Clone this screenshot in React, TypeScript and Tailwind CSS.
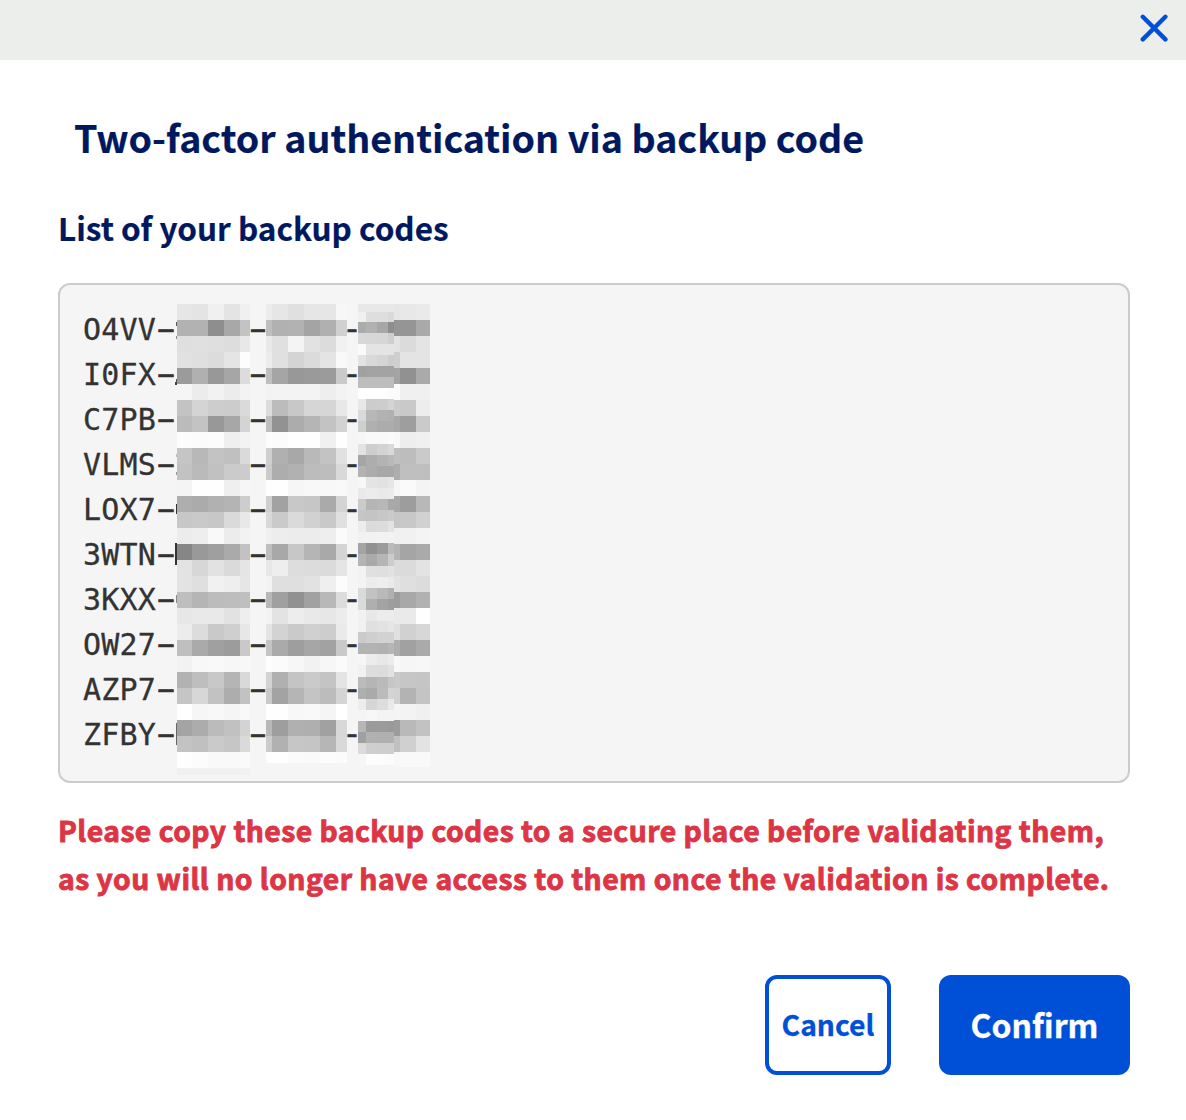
type Mark = { top: number; height: number; width: number; color: string };

const mark = (top: number, height: number, width = 1, color = '#555'): Mark => ({ top, height, width, color });

// Code prefix and the sliver of the next glyph that stays visible beside the mosaic.
const codes: [string, Mark[]][] = [
  ['O4VV', [mark(15, 4), mark(10, 3, 1, '#888')]],
  ['I0FX', [mark(27, 3, 1, '#555'), mark(0, 3, 2, '#444')]],
  ['C7PB', []],
  ['VLMS', [mark(12, 3, 1, '#bbb'), mark(15, 3, 1, '#999')]],
  ['LOX7', [mark(17, 10, 1, '#333')]],
  ['3WTN', [mark(11, 22, 2, '#333')]],
  ['3KXX', [mark(18, 8, 1, '#888')]],
  ['OW27', []],
  ['AZP7', []],
  ['ZFBY', [mark(11, 22, 1, '#666')]],
];

// Each word is one row of the censoring mosaic, two hex digits of grey per cell.
const first =
  'e6e4f0e4f0 b2b28ea8c3 dfe0dfdde8 e1dfdce5fd 9bb098a6dc f5ecf2ecf3 c3d4cdccda bbc398a7d4 fcfbfceff3 c5b8c3c0da c2bac1cbcc f4fefeeff6 aeabb1b4cd c7c9c7dae8 eceef9ecf2 86999faac2 e3d7e2dae5 e3dff1eee6 beb5bcbdbf e7e9e9e2ee ecdcc9cfe7 bfaaa09cc9 f2f8f9f7f8 b2bec8b5d9 c5d7c2adc2 fff6f8f5f9 a4acbbc1d3 c3c0cac6da fefcf9f9fa f0f0f0f0f1';
const second =
  'ece6e0e6e6f7 beb1b2a4b0d0 e8e0f4e2dcf1 ece0d4dbe4f9 bea5989a9bca f2f3f3f3eef3 dcbcc8d6d6e8 be92acb5c3d2 fcfbfefef0fe cfb0a8b9c3e1 cbadb1bcbdd9 fdfef6f8f8f9 cfa2c8c6aad4 d8cadad1c9e0 f0edececeefb bea8c7b5a9d4 e7eedddcdbe5 f3dfdfe2effc b8a091a1b8dc f3e3ede9e7ec e4d3cad0cdea c4aa9ea6a2c9 fdfbf7f2f7fb d4b0c4cac4e4 c9a3b5c4bcd4 fffef8f9f5ff b89eb0afa1d8 cbb1c6c5b6d9 fdfefbfafcfb';
const thirdLeft =
  'f0dededa abb1a78e d8d7d6ce fae4e4e4 e3d9d5cd a1a3a3a3 bdbdbdbd fefefefc e8cccdd4 dab7b2b0 ceb0acac f6f9f9fa e3ced3d9 a5adb3b9 b3aca8a8 f7e4e2e6 e9eceaec cbb5b8a9 c5c4c7ca ecdbdce3 f1f2f2f2 a4919bbb b4aab5cc f3e0dfe2 f3eceeea dac2b9b0 daafa39e f1e8ecec f1e0e2e6 cbcfd2d2 b3b3b1b6 f6ece8ec f1dddce2 bbb5bac6 afaabbd4 edd6dde9 f5f7f4f4 b69b9b99 a0b1b0b0 dbcfcece f6fdfcfb';
const thirdRight =
  'e6e8ea 9595a9 e3dbe4 cfe4e4 a491aa fbf0f0 cbc9ed a89eca f8eef0 bfbdca adbfbf f6faf4 a89db8 c6c8d1 f0f1f4 b5a5aa dbdbe3 e3dfdc 9ca8b1 eaeafe e0d1d7 aea1aa f8f6f7 c9c6c5 d2b3c4 f5f3f0 9bb9c2 c0d0e3 f8f9f9';

function Mosaic({ data, columns, rows }: { data: string; columns: string; rows: string }) {
  return (
    <div className={`grid shrink-0 content-start ${columns} ${rows}`} aria-hidden="true">
      {data.split(' ').flatMap((row, r) =>
        (row.match(/../g) ?? []).map((v, c) => (
          <div key={`${r}-${c}`} style={{ backgroundColor: `#${v}${v}${v}` }} />
        )),
      )}
    </div>
  );
}

function Hyphens({ width, stretch }: { width: string; stretch: string }) {
  return (
    <div
      className={`shrink-0 pr-px pt-[2px] font-['Liberation_Sans',sans-serif] [-webkit-text-stroke:0.6px_#333] ${width}`}
    >
      {codes.map(([code]) => (
        <div key={code} className="flex h-[45px] justify-center">
          <span className={`block ${stretch}`}>-</span>
        </div>
      ))}
    </div>
  );
}

export default function App() {
  return (
    <div className="flex min-h-[1120px] w-[1186px] flex-col bg-white font-['Noto_Sans_CJK_SC',sans-serif] text-[#00185e]">
      <header className="flex h-[60px] items-start justify-end bg-[#eceeeb] pr-[18px] pt-[14px]">
        <button aria-label="Close">
          <svg width="28" height="28" viewBox="0 0 28 28" fill="none" stroke="#0050d7" strokeWidth="4.4" strokeLinecap="round">
            <path d="M2.8 2.8 25.4 25.4M25.4 2.8 2.8 25.4" />
          </svg>
        </button>
      </header>
      <main className="flex flex-col pl-[58px] pr-14">
        <h1 className="mt-[47px] whitespace-nowrap pl-4 text-[37.6px] font-semibold leading-[60px] [-webkit-text-stroke:0.2px_#00185e]">
          Two-factor authentication via backup code
        </h1>
        <h2 className="mt-[35px] whitespace-nowrap text-[31.5px] font-semibold leading-[50px] [-webkit-text-stroke:0.2px_#00185e]">
          List of your backup codes
        </h2>
        <section className="mt-[31px] flex h-[500px] rounded-xl border-2 border-[#ccc] bg-[#f5f5f5] pl-[23px] pt-[19px] font-['DejaVu_Sans_Mono',monospace] text-[30px] leading-[45px] text-[#333]">
          <div className="w-[94px] shrink-0 pt-[3px]">
            {codes.map(([code, marks]) => (
              <div key={code} className="flex h-[45px]">
                <span className="w-[73px] tracking-[0.15px] [-webkit-text-stroke:0.3px_#333]">{code}</span>
                <span className="-mt-px flex w-[19px] justify-center font-['Liberation_Sans',sans-serif] [-webkit-text-stroke:0.6px_#333]">
                  <span className="block scale-x-[1.95]">-</span>
                </span>
                <span className="flex w-[2px] flex-col items-end">
                  {marks.map((m, i) => (
                    <span
                      key={i}
                      className="block"
                      style={{ marginTop: m.top, height: m.height, width: m.width, backgroundColor: m.color }}
                    />
                  ))}
                </span>
              </div>
            ))}
          </div>
          <Mosaic data={first} columns="grid-cols-[15px_16px_16px_16px_10px]" rows="grid-rows-[repeat(29,16px)_7px]" />
          <Hyphens width="w-[16px]" stretch="scale-x-[1.8]" />
          <Mosaic data={second} columns="grid-cols-[6px_16px_16px_16px_16px_11px]" rows="grid-rows-[repeat(28,16px)_11px]" />
          <Hyphens width="w-[11px]" stretch="scale-x-[1.15]" />
          <div className="h-[8px] w-[36px] shrink-0 bg-[#e8e8e8]">
            <div className="pt-[8px]">
              <Mosaic data={thirdLeft} columns="grid-cols-[8px_11px_11px_6px]" rows="grid-rows-[9.5px_repeat(40,11.1px)]" />
            </div>
          </div>
          <Mosaic data={thirdRight} columns="grid-cols-[6px_16px_14px]" rows="grid-rows-[repeat(28,16px)_15px]" />
        </section>
        <p className="mt-[23px] whitespace-nowrap text-[28.3px] font-bold leading-[48px] tracking-[0.46px] text-[#dc3545] [-webkit-text-stroke:0.9px_#dc3545]">
          Please copy these backup codes to a secure place before validating them,
          <br />
          as you will no longer have access to them once the validation is complete.
        </p>
        <div className="mt-[73px] flex justify-end gap-12">
          <button className="h-[100px] w-[126px] rounded-xl border-4 border-[#0050d7] pb-[2px] text-[28.3px] font-semibold text-[#0050d7] [-webkit-text-stroke:0.3px_#0050d7]">
            Cancel
          </button>
          <button className="h-[100px] w-[191px] rounded-xl bg-[#0050d7] pb-[2px] text-[32px] font-semibold text-white [-webkit-text-stroke:0.3px_white]">
            Confirm
          </button>
        </div>
      </main>
    </div>
  );
}
